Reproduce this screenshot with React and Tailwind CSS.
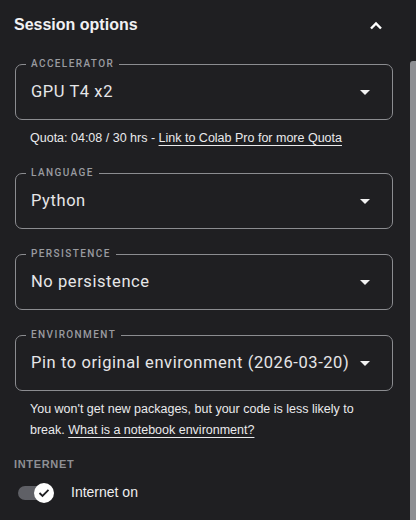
import React from "react";

const sans = { fontFamily: "'Liberation Sans', Arial, sans-serif" };
const roboto = { fontFamily: "Roboto, 'Noto Sans', sans-serif" };

// outlined select with the label sitting in the top border
const OutlinedSelect = ({ label, value }) => (
  <div className="relative ml-[15px] w-[378px] h-[56px] rounded-[7px] border border-[#8b8c90] flex items-center pl-[15px] pr-[22px]">
    <span
      style={roboto}
      className="absolute -top-[7px] left-[10px] px-[5px] bg-[#1f1f22] text-[10px] leading-[12px] font-medium tracking-[0.14em] text-[#9a9ba0]"
    >
      {label}
    </span>
    <span style={roboto} className="flex-1 text-[16.5px] text-[#e6e6e8] tracking-[0.035em]">{value}</span>
    <svg width="10" height="5" viewBox="0 0 10 5" className="mt-[1px]">
      <path d="M0 0 L10 0 L5 5 Z" fill="#f2f2f2" />
    </svg>
  </div>
);

export default function App() {
  return (
    <div style={sans} className="relative w-[416px] h-[520px] overflow-hidden bg-[#1f1f22] text-[#e6e6e8]">
      {/* header */}
      <div className="flex items-center justify-between pl-[14px] pr-[33px] pt-[13px] h-[37px]">
        <span className="text-[16px] leading-[24px] font-bold text-[#f1f1f3]">Session options</span>
        <svg width="14" height="9" viewBox="0 0 14 9">
          <path d="M2 7.5 L7 2.5 L12 7.5" stroke="#ffffff" strokeWidth="2.4" fill="none" />
        </svg>
      </div>

      <div className="mt-[27px]">
        <OutlinedSelect label="ACCELERATOR" value="GPU T4 x2" />
      </div>
      <p className="ml-[30px] mt-[10px] text-[12.5px] leading-[16px] text-[#eaeaec]">
        Quota: 04:08 / 30 hrs - <span className="underline underline-offset-[3px]">Link to Colab Pro for more Quota</span>
      </p>

      <div className="mt-[27px]">
        <OutlinedSelect label="LANGUAGE" value="Python" />
      </div>
      <div className="mt-[25px]">
        <OutlinedSelect label="PERSISTENCE" value="No persistence" />
      </div>
      <div className="mt-[25px]">
        <OutlinedSelect label="ENVIRONMENT" value="Pin to original environment (2026-03-20)" />
      </div>
      <p className="ml-[30px] mt-[8px] w-[345px] text-[12.5px] leading-[21px] text-[#eaeaec]">
        You won't get new packages, but your code is less likely to break.{" "}
        <span className="underline underline-offset-[3px]">What is a notebook environment?</span>
      </p>

      <div className="ml-[14px] mt-[16px] text-[11px] leading-[14px] font-bold tracking-[0.06em] text-[#8e8f94]">INTERNET</div>

      <div className="flex items-center ml-[18px] mt-[11px]">
        <div className="relative w-[36px] h-[20px] flex items-center">
          <div className="w-[32px] h-[14px] rounded-full bg-[#5f6066]" />
          <div className="absolute right-0 top-0 w-[20px] h-[20px] rounded-full bg-white flex items-center justify-center">
            <svg width="12" height="10" viewBox="0 0 12 10">
              <path d="M1.5 5 L4.5 8 L10.5 1.8" stroke="#1f1f22" strokeWidth="1.8" fill="none" />
            </svg>
          </div>
        </div>
        <span className="ml-[17px] text-[14px] text-[#eeeef0]">Internet on</span>
      </div>

      {/* scrollbar */}
      <div className="absolute right-0 top-[61px] bottom-0 w-[6px] rounded-tl-[3px] bg-[#8d8e92]" />
    </div>
  );
}
